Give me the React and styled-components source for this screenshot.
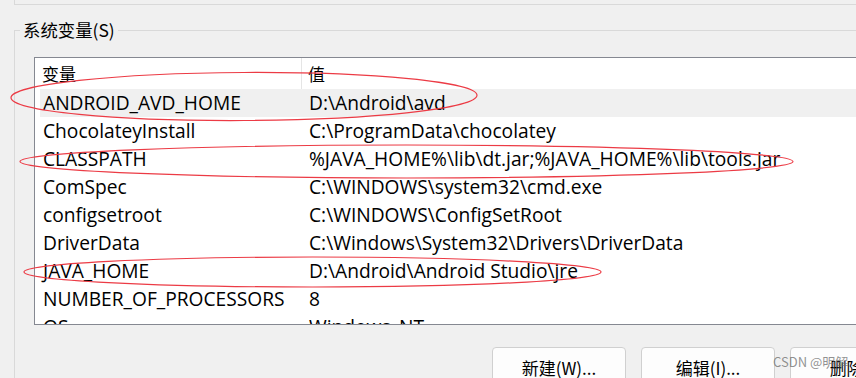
import React from "react";
import styled, { createGlobalStyle } from "styled-components";

const Global = createGlobalStyle`
  html, body { margin: 0; padding: 0; }
  body {
    background: #f0f0f0;
    overflow: hidden;
    width: 856px;
    height: 378px;
    font-family: "Open Sans", "Noto Sans CJK SC", sans-serif;
    color: #000;
  }
`;

const Page = styled.div`
  position: relative;
  width: 856px;
  height: 378px;
  overflow: hidden;
`;

const PrevGroupEdge = styled.div`
  margin-left: 14px;
  width: 900px;
  height: 4px;
  border-left: 1px solid #d9d9d9;
  border-bottom: 1px solid #d9d9d9;
`;

const Group = styled.fieldset`
  margin: 15px 0 0 14px;
  padding: 0;
  width: 1000px;
  min-width: 0;
  height: 400px;
  border: 1px solid #d9d9d9;
  border-right: none;
  box-sizing: border-box;
`;

const Legend = styled.legend`
  margin-left: 5px;
  padding: 0 3px;
  font-family: "Noto Sans CJK SC", sans-serif;
  font-size: 17.4px;
  line-height: 20px;
  height: 20px;
`;

const ListBox = styled.div`
  margin: 17px 0 0 19px;
  width: 900px;
  height: 268px;
  box-sizing: border-box;
  border: 1px solid #858891;
  background: #fff;
  padding-left: 5px;
  overflow: hidden;
`;

const Row = styled.div`
  display: grid;
  grid-template-columns: 262px 1fr;
  height: ${(p) => (p.$header ? 31 : 28)}px;
  align-items: center;
  background: ${(p) => (p.$selected ? "#f0f0f0" : "transparent")};
  font-size: 19.2px;
  white-space: nowrap;
`;

const HeadCell = styled.div`
  height: 100%;
  display: flex;
  align-items: center;
  padding-left: ${(p) => (p.$value ? 6 : 2)}px;
  border-right: ${(p) => (p.$value ? "none" : "1px solid #e5e5e5")};
  font-family: "Noto Sans CJK SC", sans-serif;
  font-size: 17px;
  box-sizing: border-box;
`;

const Cell = styled.div`
  padding-left: ${(p) => (p.$value ? 7 : 3)}px;
  margin-top: -1px;
  overflow: visible;
`;

const Buttons = styled.div`
  display: flex;
  gap: 15px;
  margin-top: 22px;
  padding-left: 477px;
`;

const Button = styled.button`
  flex: none;
  width: 134px;
  height: 40px;
  border: 1px solid #d0d0d0;
  border-radius: 4px;
  background: #fdfdfd;
  font-family: "Noto Sans CJK SC", sans-serif;
  font-size: 17px;
  color: #000;
  padding: 0;
`;

const Watermark = styled.div`
  position: absolute;
  left: 773px;
  top: 352px;
  font-family: "Noto Sans CJK SC", sans-serif;
  font-size: 13px;
  color: rgba(110, 110, 110, 0.75);
  pointer-events: none;
`;

const Annotations = styled.svg`
  position: absolute;
  left: 0;
  top: 0;
  pointer-events: none;
`;

const rows = [
  ["ANDROID_AVD_HOME", "D:\\Android\\avd", true],
  ["ChocolateyInstall", "C:\\ProgramData\\chocolatey"],
  ["CLASSPATH", "%JAVA_HOME%\\lib\\dt.jar;%JAVA_HOME%\\lib\\tools.jar"],
  ["ComSpec", "C:\\WINDOWS\\system32\\cmd.exe"],
  ["configsetroot", "C:\\WINDOWS\\ConfigSetRoot"],
  ["DriverData", "C:\\Windows\\System32\\Drivers\\DriverData"],
  ["JAVA_HOME", "D:\\Android\\Android Studio\\jre"],
  ["NUMBER_OF_PROCESSORS", "8"],
  ["OS", "Windows_NT"],
];

export default function App() {
  return (
    <Page>
      <Global />
      <PrevGroupEdge />
      <Group>
        <Legend>系统变量(S)</Legend>
        <ListBox>
          <Row $header>
            <HeadCell>变量</HeadCell>
            <HeadCell $value>值</HeadCell>
          </Row>
          {rows.map(([name, value, sel]) => (
            <Row key={name} $selected={sel}>
              <Cell>{name}</Cell>
              <Cell $value>{value}</Cell>
            </Row>
          ))}
        </ListBox>
        <Buttons>
          <Button>新建(W)...</Button>
          <Button>编辑(I)...</Button>
          <Button>删除(L)</Button>
        </Buttons>
      </Group>
      <Watermark>CSDN @明解</Watermark>
      <Annotations width="856" height="378" viewBox="0 0 856 378">
        <g fill="none" stroke="#ec3b45" strokeWidth="1.2">
          <ellipse cx="244" cy="96.5" rx="233" ry="24" transform="rotate(-0.3 244 96.5)" />
          <ellipse cx="406.5" cy="161.5" rx="386.5" ry="16.5" />
          <ellipse cx="312.5" cy="272" rx="288.5" ry="15" />
        </g>
      </Annotations>
    </Page>
  );
}
